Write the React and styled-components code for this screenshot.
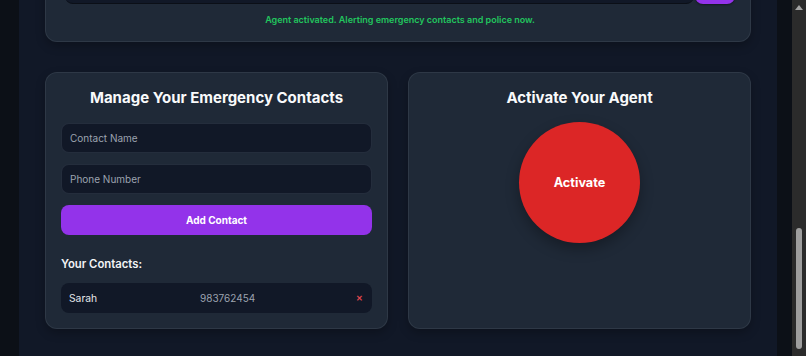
import React, { useState } from 'react'
import styled, { createGlobalStyle } from 'styled-components'

const GlobalStyle = createGlobalStyle`
  html, body {
    margin: 0;
    padding: 0;
    height: 356px;
    overflow: hidden;
    background: #0c1017;
    font-family: Inter, "Noto Sans", sans-serif;
  }
  * { box-sizing: border-box; }
`

const Page = styled.div`
  display: flex;
  height: 356px;
`

const Gutter = styled.div`
  width: ${(p) => p.$w}px;
  flex-shrink: 0;
  background: #0c1017;
`

const Main = styled.main`
  flex: 1;
  background: #111827;
  padding: 0 26px;
  overflow: hidden;
  display: flex;
  flex-direction: column;
  gap: 30px;
`

const Card = styled.section`
  background: #1f2937;
  border: 1px solid rgba(75, 85, 99, 0.35);
  border-radius: 12px;
  box-shadow: 0 4px 10px rgba(0, 0, 0, 0.25);
`

const StatusCard = styled(Card)`
  margin-top: -57px;
  padding: 20px 15px 13px 19px;
`

const InputRow = styled.div`
  display: flex;
  height: 40px;
  gap: 1px;
`

const SearchField = styled.div`
  flex: 1;
  background: #111827;
  border-radius: 8px;
  border-bottom: 1px solid #0b0f17;
`

const SendButton = styled.div`
  width: 40px;
  background: #9333ea;
  border-radius: 8px;
  box-shadow: 0 1px 2px rgba(0, 0, 0, 0.4);
`

const Status = styled.p`
  margin: 8px 0 0;
  text-align: center;
  color: #22c55e;
  font-size: 9px;
  font-weight: 600;
  line-height: 16px;
`

const Grid = styled.div`
  display: grid;
  grid-template-columns: 1fr 1fr;
  gap: 20px;
`

const Panel = styled(Card)`
  height: 257px;
  padding: 15px 15px;
  display: flex;
  flex-direction: column;
`

const Heading = styled.h2`
  margin: 0 0 15px;
  text-align: center;
  color: #f9fafb;
  font-size: 15px;
  font-weight: 700;
  line-height: 20px;
`

const Field = styled.input`
  flex-shrink: 0;
  height: 30px;
  width: 100%;
  margin-bottom: 11px;
  padding: 0 8px;
  background: #111827;
  border: 1px solid rgba(55, 65, 81, 0.5);
  border-radius: 8px;
  color: #e5e7eb;
  font-family: inherit;
  font-size: 10px;
  outline: none;
  &::placeholder { color: #9ca3af; }
`

const AddButton = styled.button`
  flex-shrink: 0;
  height: 30px;
  width: 100%;
  border: none;
  border-radius: 8px;
  background: #9333ea;
  color: #fff;
  font-family: inherit;
  font-size: 10px;
  font-weight: 700;
`

const SubHeading = styled.h3`
  margin: 21px 0 11px;
  color: #f3f4f6;
  font-size: 11.3px;
  font-weight: 600;
  line-height: 16px;
`

const ContactRow = styled.div`
  flex-shrink: 0;
  display: grid;
  grid-template-columns: 131px 1fr auto;
  align-items: center;
  height: 30px;
  padding: 0 9px 0 8px;
  background: #111827;
  border-radius: 8px;
  font-size: 10.3px;
`

const Name = styled.span`
  color: #e5e7eb;
`

const Phone = styled.span`
  color: #9ca3af;
  font-size: 10px;
`

const Remove = styled.button`
  border: none;
  background: none;
  padding: 0;
  color: #e0474e;
  font-size: 8px;
  font-family: inherit;
  font-weight: 700;
`

const AgentBody = styled.div`
  display: flex;
  justify-content: center;
`

const ActivateButton = styled.button`
  width: 121px;
  height: 121px;
  margin-top: -1px;
  border: none;
  border-radius: 50%;
  background: #dc2626;
  color: #fff;
  font-family: inherit;
  font-size: 12.7px;
  font-weight: 700;
  box-shadow: 0 6px 14px rgba(0, 0, 0, 0.3);
`

const ScrollTrack = styled.div`
  width: 14px;
  flex-shrink: 0;
  background: #2b2b2b;
  display: flex;
  flex-direction: column;
  align-items: center;
`

const ScrollArrow = styled.div`
  margin-top: 5px;
  width: 0;
  height: 0;
  border-left: 4px solid transparent;
  border-right: 4px solid transparent;
  border-bottom: 5px solid #a3a3a3;
`

const ScrollThumb = styled.div`
  margin-top: 218px;
  width: 6px;
  height: 121px;
  border-radius: 3px;
  background: #9e9e9e;
`

export default function App() {
  const [contacts] = useState([{ name: 'Sarah', phone: '983762454' }])

  return (
    <>
      <GlobalStyle />
      <Page>
        <Gutter $w={19} />
        <Main>
          <StatusCard>
            <InputRow>
              <SearchField />
              <SendButton />
            </InputRow>
            <Status>Agent activated. Alerting emergency contacts and police now.</Status>
          </StatusCard>
          <Grid>
            <Panel>
              <Heading>Manage Your Emergency Contacts</Heading>
              <Field placeholder="Contact Name" />
              <Field placeholder="Phone Number" />
              <AddButton>Add Contact</AddButton>
              <SubHeading>Your Contacts:</SubHeading>
              {contacts.map((c) => (
                <ContactRow key={c.name}>
                  <Name>{c.name}</Name>
                  <Phone>{c.phone}</Phone>
                  <Remove>✕</Remove>
                </ContactRow>
              ))}
            </Panel>
            <Panel>
              <Heading>Activate Your Agent</Heading>
              <AgentBody>
                <ActivateButton>Activate</ActivateButton>
              </AgentBody>
            </Panel>
          </Grid>
        </Main>
        <Gutter $w={15} />
        <ScrollTrack>
          <ScrollArrow />
          <ScrollThumb />
        </ScrollTrack>
      </Page>
    </>
  )
}
